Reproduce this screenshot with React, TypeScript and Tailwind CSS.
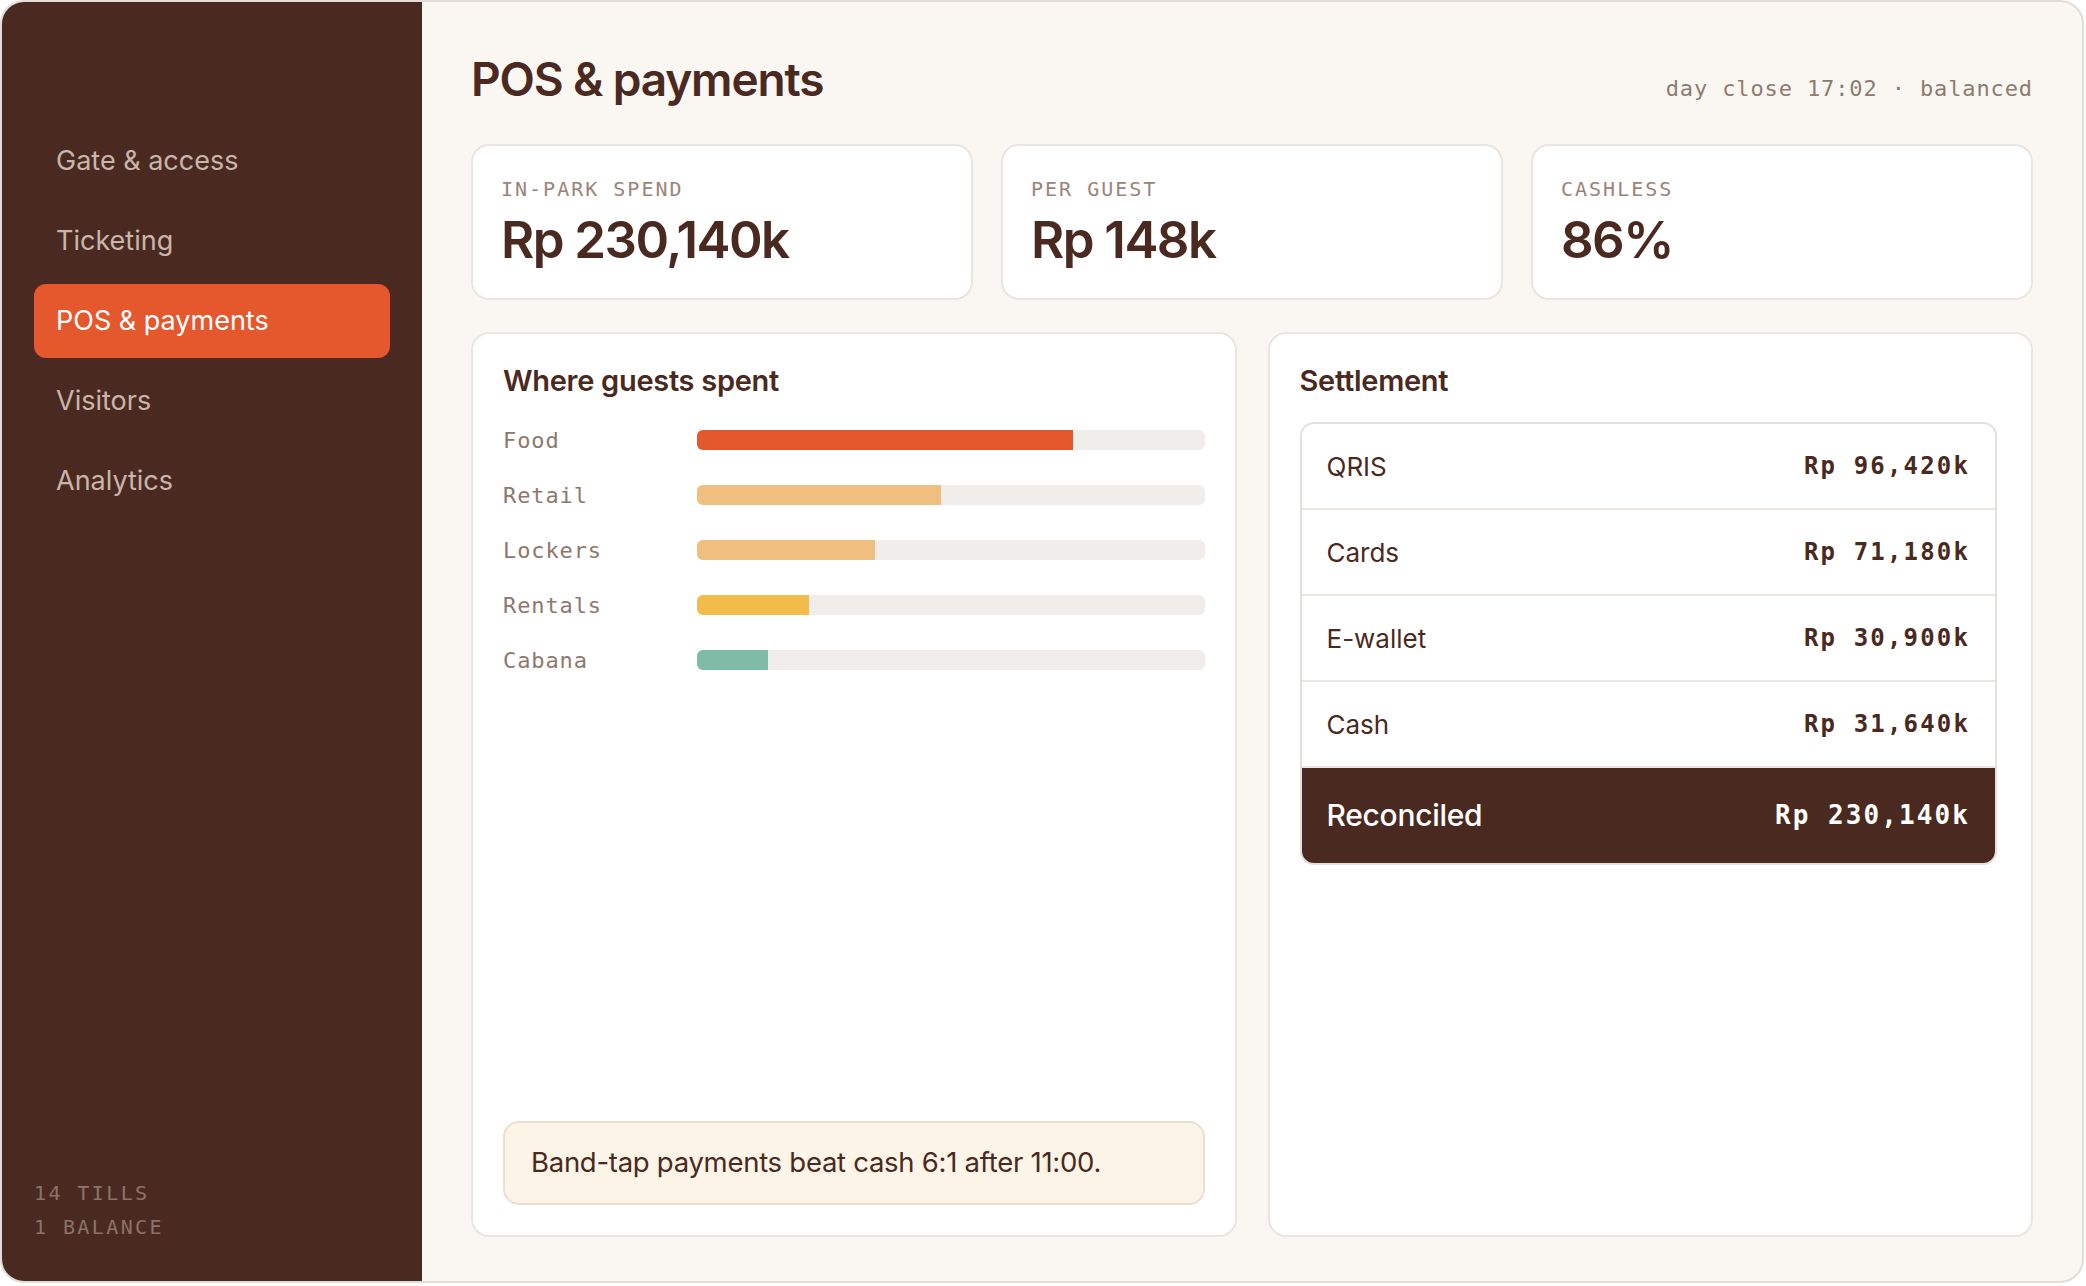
import React from "react";

const SANS = "font-['Inter','Noto_Sans',sans-serif]";
const MONO = "font-['DejaVu_Sans_Mono','Liberation_Mono',monospace]";

const navItems = ["Gate & access", "Ticketing", "POS & payments", "Visitors", "Analytics"];

const kpis = [
  { label: "IN-PARK SPEND", value: "Rp 230,140k" },
  { label: "PER GUEST", value: "Rp 148k" },
  { label: "CASHLESS", value: "86%" },
];

const spend = [
  { name: "Food", pct: 74, color: "bg-[#e5582e]" },
  { name: "Retail", pct: 48, color: "bg-[#f0bf80]" },
  { name: "Lockers", pct: 35, color: "bg-[#f0bf80]" },
  { name: "Rentals", pct: 22, color: "bg-[#f2bb4a]" },
  { name: "Cabana", pct: 14, color: "bg-[#7fbca7]" },
];

const settlement = [
  { name: "QRIS", amount: "Rp 96,420k" },
  { name: "Cards", amount: "Rp 71,180k" },
  { name: "E-wallet", amount: "Rp 30,900k" },
  { name: "Cash", amount: "Rp 31,640k" },
];

const Sidebar = () => (
  <aside className="flex w-[420px] shrink-0 flex-col bg-[#4a2a20] px-[32px] pt-[122px] pb-[37px]">
    <nav className="flex flex-col gap-[6px]">
      {navItems.map((item) => {
        const active = item === "POS & payments";
        return (
          <div
            key={item}
            className={
              active
                ? "flex h-[74px] items-center rounded-[12px] bg-[#e5582e] px-[22px] text-[27px] text-white"
                : "flex h-[74px] items-center rounded-[12px] px-[22px] text-[27px] text-[#c8b6ab]"
            }
          >
            {item}
          </div>
        );
      })}
    </nav>
    <div className={`mt-auto flex flex-col text-[20px] leading-[34px] tracking-[0.12em] text-[#8c7368] ${MONO}`}>
      <span>14 TILLS</span>
      <span>1 BALANCE</span>
    </div>
  </aside>
);

const KpiCard = ({ label, value }: { label: string; value: string }) => (
  <div className="flex flex-col gap-[8px] rounded-[18px] border-2 border-[#ebe5e1] bg-white px-[28px] pt-[29px] pb-[30px]">
    <span className={`text-[20px] leading-[28px] tracking-[0.1em] text-[#9a8479] ${MONO}`}>{label}</span>
    <span className="text-[51px] leading-[57px] font-semibold tracking-[-0.03em] text-[#4a2a20]">{value}</span>
  </div>
);

const SpendPanel = () => (
  <section className="flex flex-col rounded-[18px] border-2 border-[#ebe5e1] bg-white p-[30px] pt-[31px]">
    <h2 className="text-[29px] leading-[32px] font-semibold tracking-[-0.01em] text-[#4a2a20]">Where guests spent</h2>
    <div className="mt-[29px] flex flex-col gap-[27px]">
      {spend.map((row) => (
        <div key={row.name} className="flex h-[28px] items-center gap-[16px]">
          <span className={`w-[178px] shrink-0 text-[22px] tracking-[0.04em] text-[#8f776d] ${MONO}`}>{row.name}</span>
          <div className="h-[20px] flex-1 overflow-hidden rounded-[6px] bg-[#f0edea]">
            <div className={`h-full ${row.color}`} style={{ width: `${row.pct}%` }} />
          </div>
        </div>
      ))}
    </div>
    <div className="mt-auto flex h-[84px] items-center rounded-[16px] border-2 border-[#eddfd0] bg-[#fdf4e8] px-[26px] text-[27.5px] tracking-[-0.01em] text-[#4a2a20]">
      Band-tap payments beat cash 6:1 after 11:00.
    </div>
  </section>
);

const SettlementPanel = () => (
  <section className="flex flex-col rounded-[18px] border-2 border-[#ebe5e1] bg-white pt-[31px] pr-[34px] pb-[30px] pl-[30px]">
    <h2 className="text-[29px] leading-[32px] font-semibold tracking-[-0.01em] text-[#4a2a20]">Settlement</h2>
    <div className="mt-[25px] overflow-hidden rounded-[14px] border-2 border-[#e6e0dc]">
      {settlement.map((row) => (
        <div
          key={row.name}
          className="flex h-[86px] items-center justify-between border-b-2 border-[#ebe6e2] px-[25px] text-[26px] text-[#4a2a20]"
        >
          <span>{row.name}</span>
          <span className={`text-[24px] font-bold tracking-[0.09em] ${MONO}`}>{row.amount}</span>
        </div>
      ))}
      <div className="flex h-[95px] items-center justify-between bg-[#4a2a20] px-[25px] text-white">
        <span className="text-[30px] font-medium tracking-[-0.01em]">Reconciled</span>
        <span className={`text-[26px] font-bold tracking-[0.08em] ${MONO}`}>Rp 230,140k</span>
      </div>
    </div>
  </section>
);

export default function App() {
  return (
    <div className={`h-screen w-screen bg-white pr-[2px] pb-[3px] ${SANS}`}>
      <div className="flex h-full w-full overflow-hidden rounded-[24px] border-2 border-[#e4dcd6] bg-[#faf7f2]">
        <Sidebar />
        <main className="flex flex-1 flex-col px-[49px] pt-[50px] pb-[44px]">
          <header className="flex items-baseline justify-between">
            <h1 className="text-[46px] leading-[55px] font-semibold tracking-[-0.025em] text-[#4a2a20]">POS &amp; payments</h1>
            <span className={`text-[22px] tracking-[0.04em] text-[#8f7a70] ${MONO}`}>day close 17:02 · balanced</span>
          </header>
          <div className="mt-[37px] grid grid-cols-3 gap-[28px]">
            {kpis.map((k) => (
              <KpiCard key={k.label} {...k} />
            ))}
          </div>
          <div className="mt-[32px] grid flex-1 grid-cols-2 gap-[31px]">
            <SpendPanel />
            <SettlementPanel />
          </div>
        </main>
      </div>
    </div>
  );
}
